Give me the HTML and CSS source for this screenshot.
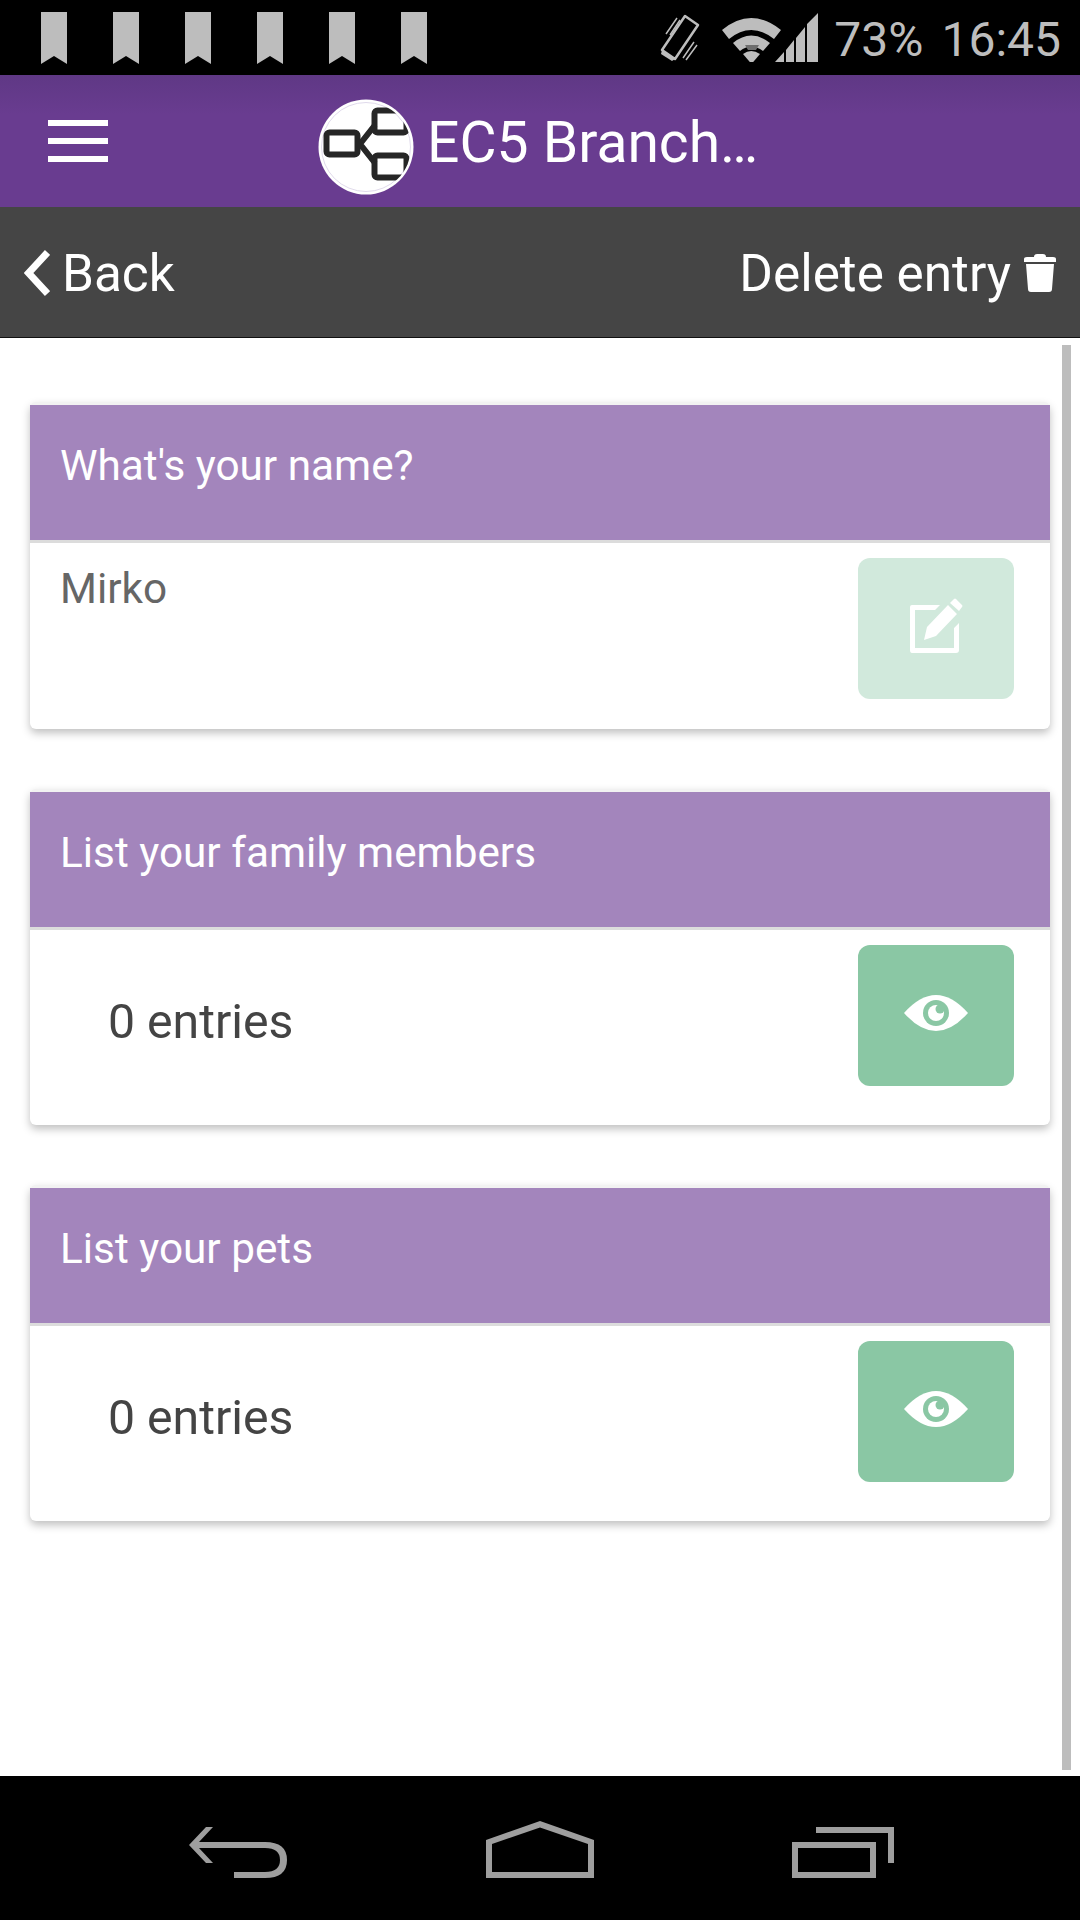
FILE: index.html
```html
<!DOCTYPE html>
<html lang="en">
<head>
    <meta charset="UTF-8">
    <meta name="viewport" content="width=device-width, initial-scale=1.0">
    <title>EC5 Branch</title>
    <link rel="stylesheet" href="styles.css">
</head>
<body>
    <div class="phone">
        <!-- Android status bar -->
        <div class="status-bar">
            <div class="notifications">
                <svg class="bookmark" viewBox="0 0 26 52"><path d="M0 0H26V52L13 44L0 52Z"/></svg>
                <svg class="bookmark" viewBox="0 0 26 52"><path d="M0 0H26V52L13 44L0 52Z"/></svg>
                <svg class="bookmark" viewBox="0 0 26 52"><path d="M0 0H26V52L13 44L0 52Z"/></svg>
                <svg class="bookmark" viewBox="0 0 26 52"><path d="M0 0H26V52L13 44L0 52Z"/></svg>
                <svg class="bookmark" viewBox="0 0 26 52"><path d="M0 0H26V52L13 44L0 52Z"/></svg>
                <svg class="bookmark" viewBox="0 0 26 52"><path d="M0 0H26V52L13 44L0 52Z"/></svg>
            </div>
            <div class="status-right">
                <svg class="icon-vibrate" width="42" height="50" viewBox="0 0 42 50">
                    <path d="M26 3L39 12L16 46L3 37Z" fill="none" stroke="#bdbdbd" stroke-width="2.5" stroke-linejoin="round"/>
                    <path d="M3 37L16 46L13 48L2 41Z" fill="#bdbdbd"/>
                    <path d="M7 21L18 5M11 22L21 7M24 45L35 29M27 47L38 32" stroke="#bdbdbd" stroke-width="1.5" fill="none"/>
                </svg>
                <div class="signal-icons">
                    <svg width="60" height="44" viewBox="0 0 60 44">
                        <path d="M0 12Q29 -12 59 12L52 21Q29 3 7 21Z" fill="#bdbdbd"/>
                        <path d="M11 25Q29 10 48 25L41 33Q29 24 18 33Z" fill="#bdbdbd"/>
                        <path d="M23 27H37L34 32H26Z" fill="#6e6e6e"/>
                        <path d="M21 36Q29 30 38 36L29.5 46Z" fill="#bdbdbd"/>
                    </svg>
                    <svg class="icon-signal" width="43" height="49" viewBox="0 0 43 49">
                        <path d="M0 49L9 39V49ZM11 37L19 27V49H11ZM21 25L30 14V49H21ZM32 11L43 0V49H32Z" fill="#bdbdbd"/>
                    </svg>
                </div>
                <span class="status-text">73%</span>
                <span class="status-text">16:45</span>
            </div>
        </div>

        <!-- Barre du projet -->
        <div class="app-header">
            <div class="hamburger"><span></span><span></span><span></span></div>
            <div class="project">
                <svg class="project-logo" width="96" height="96" viewBox="0 0 96 96">
                    <defs>
                        <clipPath id="logo-clip"><circle cx="48" cy="48" r="45"/></clipPath>
                    </defs>
                    <circle cx="48" cy="48" r="47.5" fill="#fff"/>
                    <circle cx="48" cy="48" r="44.5" fill="none" stroke="#d8d0e6" stroke-width="0.8"/>
                    <g clip-path="url(#logo-clip)" fill="none" stroke="#262626" stroke-width="6" stroke-linejoin="round">
                        <path d="M42 45L57 26M42 45L57 64"/>
                        <rect x="8.5" y="33.5" width="31" height="22" rx="3"/>
                        <rect x="56.5" y="11.5" width="32" height="22" rx="3"/>
                        <rect x="56.5" y="56.5" width="32" height="22" rx="3"/>
                    </g>
                </svg>
                <span class="project-name">EC5 Branch…</span>
            </div>
        </div>

        <!-- Barre de navigation -->
        <div class="sub-header">
            <div class="back-link">
                <svg width="26" height="46" viewBox="0 0 26 46"><path d="M23.5 2.5L4.5 23L23.5 43.5" fill="none" stroke="#fff" stroke-width="7"/></svg>
                <span>Back</span>
            </div>
            <div class="delete-link">
                <span>Delete entry</span>
                <svg width="32" height="38" viewBox="0 0 32 38">
                    <path d="M0 5Q0 3 3 3H10Q10 0 13 0H19Q22 0 22 3H29Q32 3 32 5V8H0ZM2 10H30L28 35Q28 38 25 38H7Q4 38 4 35Z" fill="#fff"/>
                </svg>
            </div>
        </div>

        <div class="content">
            <div class="entries">
                <div class="card">
                    <div class="card-title">What's your name?</div>
                    <div class="card-body card-body-short">
                        <div class="answer">Mirko</div>
                        <div class="action-button action-disabled">
                            <svg width="54" height="56" viewBox="0 0 54 56">
                                <path d="M31 7H3Q1 7 1 9V52Q1 55 3 55H47Q50 55 50 52V25L45 30V50H6V12H26Z" fill="#fff"/>
                                <path d="M15 42L18 29L39 7L48 16L27 38ZM41 5L45 1Q46 0 47 1L53 7Q54 8 53 9L50 13Z" fill="#fff"/>
                            </svg>
                        </div>
                    </div>
                </div>
                <div class="card">
                    <div class="card-title">List your family members</div>
                    <div class="card-body">
                        <div class="count">0 entries</div>
                        <div class="action-button">
                            <svg width="64" height="36" viewBox="0 0 64 36">
                                <path d="M0 18Q16 0 32 0Q48 0 64 18Q48 36 32 36Q16 36 0 18Z" fill="#fff"/>
                                <circle cx="32" cy="18" r="13" fill="#8ac7a4"/>
                                <circle cx="32" cy="18" r="8" fill="#fff"/>
                                <circle cx="36" cy="14" r="4.5" fill="#8ac7a4"/>
                            </svg>
                        </div>
                    </div>
                </div>
                <div class="card">
                    <div class="card-title">List your pets</div>
                    <div class="card-body">
                        <div class="count">0 entries</div>
                        <div class="action-button">
                            <svg width="64" height="36" viewBox="0 0 64 36">
                                <path d="M0 18Q16 0 32 0Q48 0 64 18Q48 36 32 36Q16 36 0 18Z" fill="#fff"/>
                                <circle cx="32" cy="18" r="13" fill="#8ac7a4"/>
                                <circle cx="32" cy="18" r="8" fill="#fff"/>
                                <circle cx="36" cy="14" r="4.5" fill="#8ac7a4"/>
                            </svg>
                        </div>
                    </div>
                </div>
            </div>
            <div class="scrollbar"></div>
        </div>

        <!-- Android navigation bar -->
        <div class="nav-bar">
            <svg width="99" height="51" viewBox="0 0 99 51">
                <path d="M17 0H24L10 15H76Q98 15 98 33Q98 51 76 51H45V45H76Q91 45 91 33Q91 21 76 21H10L24 36H17L0 18Z" fill="#9e9e9e"/>
            </svg>
            <svg width="108" height="57" viewBox="0 0 108 57">
                <path d="M0 19L54 0L108 19V57H0ZM6 23V51H102V23L54 6.5Z" fill="#9e9e9e" fill-rule="evenodd"/>
            </svg>
            <svg width="102" height="51" viewBox="0 0 102 51">
                <path d="M0 15H84V51H0ZM6 21V45H78V21Z" fill="#9e9e9e" fill-rule="evenodd"/>
                <path d="M24 0H102V36H96V6H24Z" fill="#9e9e9e"/>
            </svg>
        </div>
    </div>
</body>
</html>
```

FILE: styles.css
```css
* {
    box-sizing: border-box;
}
body {
    margin: 0;
    font-family: "Roboto", "Liberation Sans", sans-serif;
    background-color: #ffffff;
}
.phone {
    width: 1080px;
    height: 1920px;
    display: flex;
    flex-direction: column;
    overflow: hidden;
}
.status-bar {
    height: 75px;
    background-color: #000000;
    display: flex;
    justify-content: space-between;
    align-items: center;
    padding: 0 19px 0 41px;
}
.notifications {
    display: flex;
    gap: 46px;
}
.bookmark {
    width: 26px;
    height: 52px;
    fill: #bdbdbd;
}
.status-right {
    display: flex;
    align-items: center;
}
.icon-vibrate {
    margin-right: 21px;
}
.signal-icons {
    display: flex;
    align-items: flex-end;
    margin-right: 16px;
}
.signal-icons svg + svg {
    margin-left: -7px;
}
.status-text {
    font-size: 48px;
    color: #bdbdbd;
    margin-left: 18px;
    padding-top: 4px;
}
.status-text:first-of-type {
    margin-left: 0;
}
.app-header {
    height: 132px;
    background: linear-gradient(#5f3885, #693c90 30%);
    display: flex;
    align-items: center;
    padding-left: 48px;
}
.hamburger {
    width: 60px;
    display: flex;
    flex-direction: column;
    gap: 12px;
}
.hamburger span {
    display: block;
    height: 6px;
    background-color: #ffffff;
}
.project {
    display: flex;
    align-items: center;
    margin-left: 210px;
}
.project-logo {
    margin-top: 12px;
}
.project-name {
    color: #ffffff;
    font-size: 57px;
    margin-left: 13px;
    padding-top: 2px;
}
.sub-header {
    height: 131px;
    background-color: #454545;
    border-bottom: 1px solid #111111;
    color: #ffffff;
    font-size: 51.3px;
    display: flex;
    justify-content: space-between;
    align-items: center;
    padding: 2px 24px 0;
}
.back-link, .delete-link {
    display: flex;
    align-items: center;
}
.back-link span {
    margin-left: 12px;
}
.delete-link svg {
    margin-left: 13px;
}
.content {
    flex: 1;
    display: flex;
    padding: 7px 9px 0 30px;
    justify-content: space-between;
}
.entries {
    width: 1020px;
    padding-top: 57px;
    display: flex;
    flex-direction: column;
    gap: 60px;
}
.card {
    background-color: #ffffff;
    border-radius: 6px;
    border-top: 3px solid #f2f2f2;
    box-shadow: 0 4px 8px rgba(0, 0, 0, 0.25);
}
.card-title {
    height: 138px;
    background-color: #a385bc;
    border-bottom: 3px solid #dcdcdc;
    color: #ffffff;
    font-size: 42.3px;
    padding: 37px 0 0 30px;
    line-height: 48px;
}
.card-body {
    height: 195px;
    display: flex;
    justify-content: space-between;
    align-items: flex-start;
    padding: 15px 36px 0 30px;
}
.card-body-short {
    height: 186px;
}
.answer {
    color: #666666;
    font-size: 42.3px;
    line-height: 48px;
    padding-top: 7px;
}
.count {
    color: #444444;
    font-size: 48.2px;
    line-height: 54px;
    padding: 50px 0 0 48px;
}
.action-button {
    width: 156px;
    height: 141px;
    border-radius: 12px;
    background-color: #8ac7a4;
    display: flex;
    justify-content: center;
    align-items: center;
    padding-bottom: 5px;
}
.action-disabled {
    background-color: #d1e9dc;
}
.scrollbar {
    width: 9px;
    height: 1425px;
    background-color: #bdbdbd;
}
.nav-bar {
    height: 144px;
    background-color: #000000;
    display: flex;
    justify-content: center;
    align-items: flex-end;
    gap: 198px;
    padding: 0 0 42px 2px;
}
```
